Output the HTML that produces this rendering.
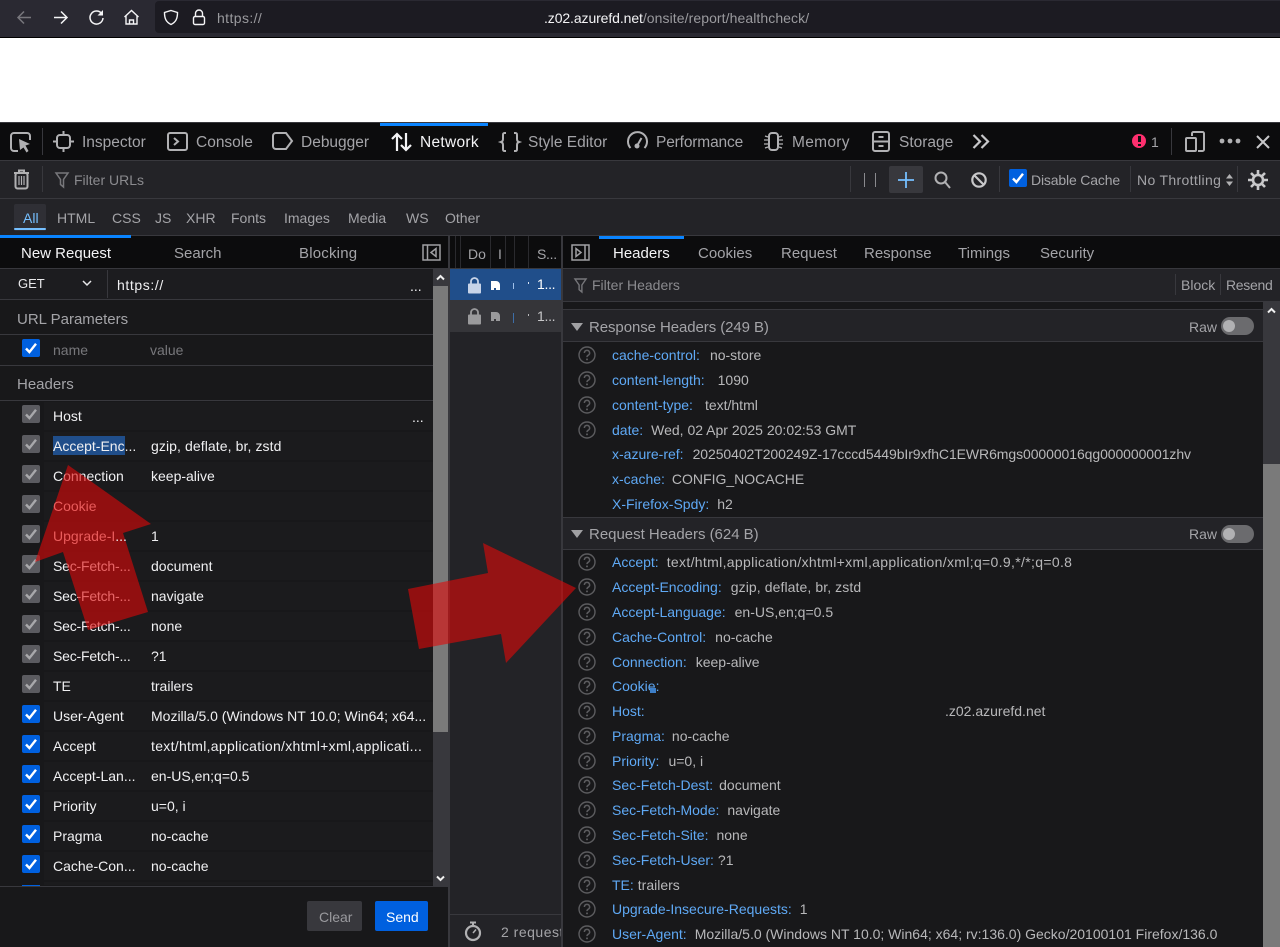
<!DOCTYPE html>
<html lang="en"><head><meta charset="utf-8"><title>Network</title>
<style>
html,body{margin:0;padding:0;width:1280px;height:947px;overflow:hidden;background:#18181a}
body{position:relative;font-family:"Liberation Sans",sans-serif;font-size:14px;color:#b1b1b3}
.b{position:absolute;display:block}
.t{position:absolute;white-space:nowrap;height:20px;line-height:20px}
.m{font-size:15.5px}
.w{color:#f0f0f2}.g{color:#a4a4a8}.d{color:#8a8a8e}.n{color:#5fa9f5}.v{color:#b8b8ba}
svg{position:absolute;display:block;overflow:visible}
.i{fill:none;stroke:#b1b1b3;stroke-width:2}
.cb{position:absolute;left:22px;width:18px;height:18px;border-radius:2px;background:#5b5b60}
.cb svg{left:0;top:0}
.cb.on{background:#0060df}
.q{position:absolute;left:578px;width:18px;height:18px}
</style></head><body>

<svg width="0" height="0" style="position:absolute"><defs>
<symbol id="q" viewBox="0 0 18 18"><circle cx="9" cy="9" r="8" fill="none" stroke="#5c5c5f" stroke-width="1.4"/><path d="M6.4 7a2.6 2.6 0 1 1 3.9 2.2c-.9.5-1.3 1-1.3 1.9" fill="none" stroke="#5c5c5f" stroke-width="1.5"/><circle cx="9" cy="13.4" r="1" fill="#5c5c5f"/></symbol>
<symbol id="ck" viewBox="0 0 18 18"><path d="M4 9.5l3.4 3.6L14 4.8" fill="none" stroke="currentColor" stroke-width="2.4"/></symbol>
</defs></svg>

<!-- browser bar -->
<div class="b" style="left:0;top:0;width:1280px;height:37px;background:#2a2932"></div>
<div class="b" style="left:155px;top:1px;width:1125px;height:32px;background:#1c1b22;border-radius:4px 0 0 4px"></div>
<div class="b" style="left:0;top:37px;width:1280px;height:1px;background:#000"></div>
<svg style="left:16px;top:9px" width="17" height="17" viewBox="0 0 17 17"><path d="M15 8.500H2M8 2.500L2 8.500l6 6" fill="none" stroke="#77767c" stroke-width="1.500"/></svg>
<svg style="left:52px;top:9px" width="17" height="17" viewBox="0 0 17 17"><path d="M2 8.500h13M9 2.500l6 6-6 6" fill="none" stroke="#f4f4f6" stroke-width="1.500"/></svg>
<svg style="left:88px;top:9px" width="17" height="17" viewBox="0 0 17 17"><path d="M13.600 4.500A6.500 6.500 0 1 0 15 9" fill="none" stroke="#f4f4f6" stroke-width="1.500"/><path d="M15 1v5.500H9.500z" fill="#f4f4f6"/></svg>
<svg style="left:123px;top:9px" width="17" height="17" viewBox="0 0 17 17"><path d="M1.500 8L8.500 1.500 15.500 8M3 7v8h11V7M6.500 15v-4h4v4" fill="none" stroke="#f4f4f6" stroke-width="1.400"/></svg>
<svg style="left:163px;top:9px" width="16" height="17" viewBox="0 0 16 17"><path d="M8 1.500l6.500 2c0 6-1.500 9.500-6.500 12C3 13 1.500 9.500 1.500 3.500z" fill="none" stroke="#f4f4f6" stroke-width="1.400"/></svg>
<svg style="left:192px;top:9px" width="14" height="17" viewBox="0 0 14 17"><path d="M3.500 7.500V4.500a3.500 3.500 0 0 1 7 0v3" fill="none" stroke="#f4f4f6" stroke-width="1.400"/><rect x="1.500" y="7.500" width="11" height="8" rx="1.500" fill="none" stroke="#f4f4f6" stroke-width="1.400"/></svg>
<div class="t" style="left:217px;top:8px;color:#9a9a9e;letter-spacing:.4px">https://</div>
<div class="t" style="left:544px;top:8px;color:#f4f4f6"><span style="letter-spacing:-.1px">.z02.azurefd.net</span><span style="color:#9a9a9e;letter-spacing:.08px">/onsite/report/healthcheck/</span></div>

<!-- page -->
<div class="b" style="left:0;top:38px;width:1280px;height:84px;background:#fff"></div>

<!-- devtools tabs -->
<div class="b" style="left:0;top:122px;width:1280px;height:38px;background:#0c0c0d;border-top:1px solid #38383d;box-sizing:border-box"></div>
<div class="b" style="left:380px;top:123px;width:108px;height:3px;background:#0a84ff"></div>
<div class="b" style="left:0;top:160px;width:1280px;height:1px;background:#38383d"></div>
<svg style="left:10px;top:132px" width="21" height="21" viewBox="0 0 21 21"><path d="M8 19H4a3 3 0 0 1-3-3V4a3 3 0 0 1 3-3h13a3 3 0 0 1 3 3v4" class="i"/><path d="M9 7l11 5-4.500 1.500L18.500 19l-2 1.500-3-5L10 18z" fill="#b1b1b3"/></svg>
<div class="b" style="left:42px;top:128px;width:1px;height:27px;background:#38383d"></div>
<svg style="left:53px;top:131px" width="21" height="21" viewBox="0 0 21 21"><rect x="4" y="4" width="13" height="13" rx="3" class="i"/><path d="M10.500 0v4M10.500 17v4M0 10.500h4M17 10.500h4" class="i"/></svg>
<div class="t g m" style="left:82px;top:133px">Inspector</div>
<svg style="left:167px;top:132px" width="21" height="19" viewBox="0 0 21 19"><rect x="1" y="1" width="19" height="17" rx="2" class="i"/><path d="M7 6l4 3.500L7 13" class="i"/></svg>
<div class="t g m" style="left:196px;top:133px">Console</div>
<svg style="left:272px;top:132px" width="21" height="18" viewBox="0 0 21 18"><path d="M4 1h10l6 8-6 8H4a3 3 0 0 1-3-3V4a3 3 0 0 1 3-3z" class="i"/></svg>
<div class="t g m" style="left:301px;top:133px">Debugger</div>
<svg style="left:391px;top:132px" width="21" height="20" viewBox="0 0 21 20"><path d="M6 19V2M1 7l5-5 5 5M15 1v17M10 13l5 5 5-5" fill="none" stroke="#f4f4f6" stroke-width="2.200"/></svg>
<div class="t m" style="left:420px;top:133px;color:#f4f4f6;letter-spacing:.3px">Network</div>
<svg style="left:500px;top:132px" width="20" height="20" viewBox="0 0 20 20"><path d="M6 1H4.500C3 1 3 2 3 3.500V7c0 1.500-.5 2.500-2 3 1.500.5 2 1.500 2 3v3.500C3 18 3 19 4.500 19H6M14 1h1.500C17 1 17 2 17 3.500V7c0 1.500.5 2.500 2 3-1.500.5-2 1.500-2 3v3.500c0 1.500 0 2.500-1.500 2.500H14" class="i"/></svg>
<div class="t g m" style="left:528px;top:133px">Style Editor</div>
<svg style="left:627px;top:131px" width="21" height="21" viewBox="0 0 21 21"><path d="M3.500 17A9.500 9.500 0 1 1 17.500 17" class="i"/><circle cx="10" cy="15" r="2.500" fill="#b1b1b3"/><path d="M10.500 14l4-7" class="i"/></svg>
<div class="t g m" style="left:656px;top:133px;letter-spacing:-.15px">Performance</div>
<svg style="left:763px;top:131px" width="21" height="21" viewBox="0 0 21 21"><rect x="6" y="2" width="9" height="17" rx="3" class="i"/><path d="M2 5l3 1M1 9h4M1 13h4M2 17l3-1M19 5l-3 1M20 9h-4M20 13h-4M19 17l-3-1" fill="none" stroke="#b1b1b3" stroke-width="1.300"/></svg>
<div class="t g m" style="left:792px;top:133px;letter-spacing:.3px">Memory</div>
<svg style="left:872px;top:131px" width="18" height="21" viewBox="0 0 18 21"><rect x="1" y="1" width="16" height="19" rx="2" class="i"/><path d="M1 10.500h16M6.500 6h5M6.500 15h5" class="i"/></svg>
<div class="t g m" style="left:899px;top:133px">Storage</div>
<svg style="left:972px;top:134px" width="18" height="15" viewBox="0 0 18 15"><path d="M1.500 1l6.500 6.500L1.500 14M9.500 1l6.500 6.500L9.500 14" fill="none" stroke="#c8c8ca" stroke-width="2.200"/></svg>
<div class="b" style="left:1132px;top:134px;width:14px;height:14px;border-radius:50%;background:#ff2f6e"></div>
<div class="b" style="left:1138px;top:136px;width:2.500px;height:6px;background:#111"></div>
<div class="b" style="left:1138px;top:143.500px;width:2.500px;height:2.500px;background:#111"></div>
<div class="t g" style="left:1151px;top:132px">1</div>
<div class="b" style="left:1171px;top:128px;width:1px;height:27px;background:#38383d"></div>
<svg style="left:1185px;top:131px" width="20" height="21" viewBox="0 0 20 21"><path d="M7 5V2.500A1.500 1.500 0 0 1 8.500 1h9A1.500 1.500 0 0 1 19 2.500v16a1.500 1.500 0 0 1-1.500 1.500H13" class="i"/><rect x="1" y="7" width="10" height="13" rx="1" class="i"/></svg>
<svg style="left:1219px;top:138px" width="22" height="6" viewBox="0 0 22 6"><circle cx="3" cy="3" r="2.400" fill="#b1b1b3"/><circle cx="11" cy="3" r="2.400" fill="#b1b1b3"/><circle cx="19" cy="3" r="2.400" fill="#b1b1b3"/></svg>
<svg style="left:1256px;top:135px" width="14" height="14" viewBox="0 0 14 14"><path d="M1 1l12 12M13 1L1 13" fill="none" stroke="#c8c8ca" stroke-width="2"/></svg>

<!-- toolbar -->
<div class="b" style="left:0;top:161px;width:1280px;height:37px;background:#232327"></div>
<div class="b" style="left:0;top:198px;width:1280px;height:1px;background:#38383d"></div>
<svg style="left:13px;top:169px" width="17" height="21" viewBox="0 0 17 21"><path d="M1 4h15M6 4V1.500h5V4" class="i"/><rect x="2.500" y="4" width="12" height="15.500" rx="2" class="i"/><path d="M6 7v9M8.500 7v9M11 7v9" fill="none" stroke="#b1b1b3" stroke-width="1.200"/></svg>
<div class="b" style="left:42px;top:166px;width:1px;height:26px;background:#38383d"></div>
<svg style="left:55px;top:172px" width="14" height="16" viewBox="0 0 14 16"><path d="M1 1h12L8.500 7.500V15L5.500 12.500V7.500z" fill="none" stroke="#77777b" stroke-width="1.500"/></svg>
<div class="t d" style="left:74px;top:170px">Filter URLs</div>
<div class="b" style="left:850px;top:166px;width:1px;height:26px;background:#38383d"></div>
<div class="b" style="left:863.500px;top:173px;width:1.500px;height:14px;background:#8a8a8e"></div>
<div class="b" style="left:874.500px;top:173px;width:1.500px;height:14px;background:#8a8a8e"></div>
<div class="b" style="left:889px;top:166px;width:34px;height:27px;background:#38383d;border-radius:2px"></div>
<svg style="left:898px;top:172px" width="16" height="16" viewBox="0 0 16 16"><path d="M8 0v16M0 8h16" fill="none" stroke="#75bfff" stroke-width="1.800"/></svg>
<svg style="left:934px;top:171px" width="17" height="18" viewBox="0 0 17 18"><circle cx="7" cy="7" r="5.500" class="i"/><path d="M11 11l5 6" class="i"/></svg>
<svg style="left:971px;top:172px" width="16" height="16" viewBox="0 0 16 16"><circle cx="8" cy="8" r="6.700" fill="none" stroke="#c8c8ca" stroke-width="2.200"/><path d="M3.500 3.500l9 9" fill="none" stroke="#c8c8ca" stroke-width="2.200"/></svg>
<div class="b" style="left:999px;top:166px;width:1px;height:26px;background:#38383d"></div>
<div class="cb on" style="left:1009px;top:169px;color:#fff"><svg width="18" height="18"><use href="#ck"/></svg></div>
<div class="t g" style="left:1031px;top:170px;letter-spacing:-.16px">Disable Cache</div>
<div class="b" style="left:1130px;top:166px;width:1px;height:26px;background:#38383d"></div>
<div class="t g" style="left:1137px;top:170px;letter-spacing:.33px">No Throttling</div>
<svg style="left:1226px;top:174px" width="7" height="12" viewBox="0 0 7 12"><path d="M3.500 0L7 4.500H0zM3.500 12L0 7.500h7z" fill="#b1b1b3"/></svg>
<div class="b" style="left:1237px;top:166px;width:1px;height:26px;background:#38383d"></div>
<svg style="left:1248px;top:170px" width="20" height="20" viewBox="0 0 20 20"><circle cx="10" cy="10" r="5" fill="none" stroke="#c8c8ca" stroke-width="2.600"/><path d="M10 0v4M10 16v4M0 10h4M16 10h4M3 3l3 3M14 14l3 3M17 3l-3 3M6 14l-3 3" fill="none" stroke="#c8c8ca" stroke-width="2.600"/></svg>

<!-- filter bar -->
<div class="b" style="left:0;top:199px;width:1280px;height:36px;background:#232327"></div>
<div class="b" style="left:0;top:235px;width:1280px;height:1px;background:#38383d"></div>
<div class="b" style="left:14px;top:204px;width:32px;height:27px;background:#2f2f35;border-radius:2px"></div>
<div class="b" style="left:14px;top:228px;width:32px;height:2px;background:#75bfff;border-radius:1px"></div>
<div class="t" style="left:23px;top:208px;color:#75bfff">All</div>
<div class="t g" style="left:57px;top:208px">HTML</div>
<div class="t g" style="left:112px;top:208px">CSS</div>
<div class="t g" style="left:155px;top:208px">JS</div>
<div class="t g" style="left:186px;top:208px">XHR</div>
<div class="t g" style="left:231px;top:208px">Fonts</div>
<div class="t g" style="left:284px;top:208px">Images</div>
<div class="t g" style="left:348px;top:208px">Media</div>
<div class="t g" style="left:406px;top:208px">WS</div>
<div class="t g" style="left:445px;top:208px">Other</div>

<!-- left panel -->
<div class="b" style="left:0;top:236px;width:448px;height:32px;background:#0c0c0d"></div>
<div class="b" style="left:0;top:235px;width:131px;height:3px;background:#0a84ff"></div>
<div class="b" style="left:0;top:268px;width:448px;height:1px;background:#38383d"></div>
<div class="t" style="left:21px;top:244px;font-size:15px;color:#f4f4f6">New Request</div>
<div class="t g" style="left:174px;top:244px;font-size:15px">Search</div>
<div class="t g" style="left:299px;top:244px;font-size:15px;letter-spacing:.2px">Blocking</div>
<svg style="left:422px;top:244px" width="19" height="17" viewBox="0 0 19 17"><rect x="1" y="1" width="17" height="15" fill="none" stroke="#a0a0a3" stroke-width="1.500"/><path d="M5.500 1v15M14 4.500v8L9 8.500z" fill="none" stroke="#a0a0a3" stroke-width="1.500"/></svg>

<div class="b" style="left:0;top:269px;width:433px;height:31px;background:#1c1c1f"></div>
<div class="t" style="left:18px;top:274px;color:#e8e8ea;font-size:13px">GET</div>
<svg style="left:82px;top:280px" width="10" height="7" viewBox="0 0 10 7"><path d="M1 1l4 4 4-4" fill="none" stroke="#e8e8ea" stroke-width="1.500"/></svg>
<div class="b" style="left:107px;top:270px;width:1px;height:28px;background:#38383d"></div>
<div class="t w" style="left:117px;top:275px;letter-spacing:.6px">https://</div>
<div class="t w" style="left:410px;top:276px">...</div>
<div class="b" style="left:0;top:299px;width:433px;height:1px;background:#38383d"></div>
<div class="t g" style="left:17px;top:310px;font-size:15px">URL Parameters</div>
<div class="b" style="left:0;top:334px;width:433px;height:1px;background:#38383d"></div>
<div class="cb on" style="top:339px;color:#fff"><svg width="18" height="18"><use href="#ck"/></svg></div>
<div class="t" style="left:53px;top:340px;color:#77777b;font-size:14px">name</div>
<div class="t" style="left:150px;top:340px;color:#77777b;font-size:14px">value</div>
<div class="b" style="left:0;top:365px;width:433px;height:1px;background:#38383d"></div>
<div class="t g" style="left:17px;top:375px;font-size:15px">Headers</div>
<div class="b" style="left:0;top:400px;width:433px;height:1px;background:#38383d"></div>

<!-- left rows -->
<div class="b" style="left:44px;top:402px;width:389px;height:483px;background:repeating-linear-gradient(#1b1b1d 0,#1b1b1d 28px,#18181a 28px,#18181a 30px)"></div>

<div class="cb" style="top:405px;color:#a8a8ab"><svg width="18" height="18"><use href="#ck"/></svg></div>
<div class="cb" style="top:435px;color:#a8a8ab"><svg width="18" height="18"><use href="#ck"/></svg></div>
<div class="cb" style="top:465px;color:#a8a8ab"><svg width="18" height="18"><use href="#ck"/></svg></div>
<div class="cb" style="top:495px;color:#a8a8ab"><svg width="18" height="18"><use href="#ck"/></svg></div>
<div class="cb" style="top:525px;color:#a8a8ab"><svg width="18" height="18"><use href="#ck"/></svg></div>
<div class="cb" style="top:555px;color:#a8a8ab"><svg width="18" height="18"><use href="#ck"/></svg></div>
<div class="cb" style="top:585px;color:#a8a8ab"><svg width="18" height="18"><use href="#ck"/></svg></div>
<div class="cb" style="top:615px;color:#a8a8ab"><svg width="18" height="18"><use href="#ck"/></svg></div>
<div class="cb" style="top:645px;color:#a8a8ab"><svg width="18" height="18"><use href="#ck"/></svg></div>
<div class="cb" style="top:675px;color:#a8a8ab"><svg width="18" height="18"><use href="#ck"/></svg></div>
<div class="cb on" style="top:705px;color:#fff"><svg width="18" height="18"><use href="#ck"/></svg></div>
<div class="cb on" style="top:735px;color:#fff"><svg width="18" height="18"><use href="#ck"/></svg></div>
<div class="cb on" style="top:765px;color:#fff"><svg width="18" height="18"><use href="#ck"/></svg></div>
<div class="cb on" style="top:795px;color:#fff"><svg width="18" height="18"><use href="#ck"/></svg></div>
<div class="cb on" style="top:825px;color:#fff"><svg width="18" height="18"><use href="#ck"/></svg></div>
<div class="cb on" style="top:855px;color:#fff"><svg width="18" height="18"><use href="#ck"/></svg></div>
<div class="b" style="left:22px;top:885px;width:18px;height:1px;background:#0060df"></div>

<div class="b" style="left:53px;top:436px;width:72px;height:19px;background:#204e8a"></div>
<div class="t w" style="left:53px;top:406px">Host</div>
<div class="t w" style="left:412px;top:407px">...</div>
<div class="t w" style="left:53px;top:436px">Accept-Enc...</div>
<div class="t w" style="left:151px;top:436px;letter-spacing:.09px">gzip, deflate, br, zstd</div>
<div class="t w" style="left:53px;top:466px">Connection</div>
<div class="t w" style="left:151px;top:466px">keep-alive</div>
<div class="t w" style="left:151px;top:526px">1</div>
<div class="t w" style="left:53px;top:556px;letter-spacing:-.2px">Sec-Fetch-...</div>
<div class="t w" style="left:151px;top:556px">document</div>
<div class="t w" style="left:53px;top:586px;letter-spacing:-.2px">Sec-Fetch-...</div>
<div class="t w" style="left:151px;top:586px">navigate</div>
<div class="t w" style="left:53px;top:616px;letter-spacing:-.2px">Sec-Fetch-...</div>
<div class="t w" style="left:151px;top:616px">none</div>
<div class="t w" style="left:53px;top:646px;letter-spacing:-.2px">Sec-Fetch-...</div>
<div class="t w" style="left:151px;top:646px">?1</div>
<div class="t w" style="left:53px;top:676px">TE</div>
<div class="t w" style="left:151px;top:676px">trailers</div>
<div class="t w" style="left:53px;top:706px">User-Agent</div>
<div class="t w" style="left:151px;top:706px">Mozilla/5.0 (Windows NT 10.0; Win64; x64...</div>
<div class="t w" style="left:53px;top:736px">Accept</div>
<div class="t w" style="left:151px;top:736px;letter-spacing:.3px">text/html,application/xhtml+xml,applicati...</div>
<div class="t w" style="left:53px;top:766px">Accept-Lan...</div>
<div class="t w" style="left:151px;top:766px">en-US,en;q=0.5</div>
<div class="t w" style="left:53px;top:796px">Priority</div>
<div class="t w" style="left:151px;top:796px">u=0, i</div>
<div class="t w" style="left:53px;top:826px">Pragma</div>
<div class="t w" style="left:151px;top:826px">no-cache</div>
<div class="t w" style="left:53px;top:856px">Cache-Con...</div>
<div class="t w" style="left:151px;top:856px">no-cache</div>

<!-- left scrollbar -->
<div class="b" style="left:433px;top:269px;width:15px;height:617px;background:#38383d"></div>
<div class="b" style="left:433px;top:286px;width:15px;height:446px;background:#7a7a7a"></div>
<svg style="left:436px;top:274px" width="9" height="7" viewBox="0 0 9 7"><path d="M1 5.500l3.500-3.500 3.500 3.500" fill="none" stroke="#f0f0f0" stroke-width="2"/></svg>
<svg style="left:436px;top:875px" width="9" height="7" viewBox="0 0 9 7"><path d="M1 1.500L4.500 5 8 1.500" fill="none" stroke="#f0f0f0" stroke-width="2"/></svg>

<!-- left footer -->
<div class="b" style="left:0;top:886px;width:448px;height:61px;background:#18181a;border-top:1px solid #38383d;box-sizing:border-box"></div>
<div class="b" style="left:307px;top:901px;width:55px;height:30px;background:#38383d;border-radius:2px"></div>
<div class="t" style="left:319px;top:907px;color:#9a9a9e">Clear</div>
<div class="b" style="left:375px;top:901px;width:53px;height:30px;background:#0060df;border-radius:2px"></div>
<div class="t" style="left:386px;top:907px;color:#fff">Send</div>

<!-- dividers -->
<div class="b" style="left:448px;top:236px;width:2px;height:711px;background:#38383d"></div>
<div class="b" style="left:561px;top:236px;width:2px;height:711px;background:#38383d"></div>

<!-- middle -->
<div class="b" style="left:450px;top:236px;width:111px;height:711px;background:#232327;overflow:hidden">
  <div class="b" style="left:0;top:0;width:111px;height:32px;background:#0c0c0d"></div>
  <div class="b" style="left:5px;top:0;width:1px;height:32px;background:#2a2a2e"></div>
  <div class="b" style="left:10px;top:0;width:1px;height:32px;background:#2a2a2e"></div>
  <div class="b" style="left:40px;top:0;width:1px;height:32px;background:#2a2a2e"></div>
  <div class="b" style="left:55px;top:0;width:1px;height:32px;background:#2a2a2e"></div>
  <div class="b" style="left:64px;top:0;width:1px;height:32px;background:#2a2a2e"></div>
  <div class="b" style="left:78px;top:0;width:1px;height:32px;background:#2a2a2e"></div>
  <div class="t g" style="left:18px;top:8px">Do</div>
  <div class="t g" style="left:48px;top:8px">I</div>
  <div class="t g" style="left:87px;top:8px;letter-spacing:-.3px">S...</div>
  <div class="b" style="left:0;top:32px;width:111px;height:1px;background:#38383d"></div>
  <div class="b" style="left:0;top:33px;width:111px;height:31px;background:#204e8a"></div>
  <div class="b" style="left:0;top:64px;width:111px;height:32px;background:#353539"></div>
  <svg style="left:18px;top:41px" width="13" height="17" viewBox="0 0 13 17"><path d="M3 7V4.500a3.500 3.500 0 0 1 7 0V7" fill="none" stroke="#c8d4e8" stroke-width="1.800"/><rect x="0" y="6.500" width="13" height="10" rx="1" fill="#c8d4e8"/></svg>
  <svg style="left:41px;top:45px" width="9" height="10" viewBox="0 0 9 10"><path d="M0 0h5a4 4 0 0 1 4 4v5H5V7H3v2H0z" fill="#fff"/></svg>
  <div class="b" style="left:63px;top:47px;width:1px;height:6px;background:#9fc0ea"></div>
  <div class="b" style="left:78px;top:46px;width:1px;height:2px;background:#d8e4f4"></div>
  <div class="t" style="left:87px;top:38px;color:#fff;letter-spacing:-.3px">1...</div>
  <svg style="left:18px;top:72px" width="13" height="17" viewBox="0 0 13 17"><path d="M3 7V4.500a3.500 3.500 0 0 1 7 0V7" fill="none" stroke="#9a9a9c" stroke-width="1.800"/><rect x="0" y="6.500" width="13" height="10" rx="1" fill="#9a9a9c"/></svg>
  <svg style="left:41px;top:76px" width="9" height="10" viewBox="0 0 9 10"><path d="M0 0h5a4 4 0 0 1 4 4v5H5V7H3v2H0z" fill="#9a9a9c"/></svg>
  <div class="b" style="left:63px;top:77px;width:1px;height:10px;background:#3d6ea8"></div>
  <div class="b" style="left:78px;top:78px;width:1px;height:2px;background:#b8b8ba"></div>
  <div class="t" style="left:87px;top:70px;color:#c8c8ca;letter-spacing:-.3px">1...</div>
  <div class="b" style="left:0;top:678px;width:111px;height:1px;background:#38383d"></div>
  <svg style="left:14px;top:685px" width="18" height="21" viewBox="0 0 18 21"><path d="M6 1.500h6M9 1.500v3" fill="none" stroke="#b1b1b3" stroke-width="2"/><circle cx="9" cy="12" r="7" fill="none" stroke="#b1b1b3" stroke-width="2.200"/><path d="M9 12l3-3.500" fill="none" stroke="#b1b1b3" stroke-width="1.500"/></svg>
  <div class="t g" style="left:51px;top:686px;letter-spacing:.5px">2 requests</div>
</div>

<!-- right panel -->
<div class="b" style="left:563px;top:236px;width:717px;height:32px;background:#0c0c0d"></div>
<div class="b" style="left:599px;top:236px;width:85px;height:3px;background:#0a84ff"></div>
<div class="b" style="left:563px;top:268px;width:717px;height:1px;background:#38383d"></div>
<svg style="left:571px;top:244px" width="19" height="17" viewBox="0 0 19 17"><rect x="1" y="1" width="17" height="15" fill="none" stroke="#a0a0a3" stroke-width="1.500"/><path d="M14 1v15M5 4.500v8l5-4z" fill="none" stroke="#a0a0a3" stroke-width="1.500"/></svg>
<div class="t" style="left:613px;top:244px;font-size:15px;color:#f4f4f6">Headers</div>
<div class="t g" style="left:698px;top:244px;font-size:15px">Cookies</div>
<div class="t g" style="left:781px;top:244px;font-size:15px">Request</div>
<div class="t g" style="left:864px;top:244px;font-size:15px">Response</div>
<div class="t g" style="left:958px;top:244px;font-size:15px">Timings</div>
<div class="t g" style="left:1040px;top:244px;font-size:15px">Security</div>

<div class="b" style="left:563px;top:269px;width:717px;height:32px;background:#232327"></div>
<div class="b" style="left:563px;top:301px;width:717px;height:1px;background:#38383d"></div>
<svg style="left:574px;top:278px" width="13" height="15" viewBox="0 0 14 16"><path d="M1 1h12L8.500 7.500V15L5.500 12.500V7.500z" fill="none" stroke="#77777b" stroke-width="1.500"/></svg>
<div class="t d" style="left:592px;top:275px">Filter Headers</div>
<div class="b" style="left:1175px;top:274px;width:1px;height:21px;background:#38383d"></div>
<div class="t g" style="left:1181px;top:275px">Block</div>
<div class="b" style="left:1220px;top:274px;width:1px;height:21px;background:#38383d"></div>
<div class="t g" style="left:1226px;top:275px;letter-spacing:-.3px">Resend</div>

<!-- section: response -->
<div class="b" style="left:563px;top:309px;width:700px;height:33px;background:#232327;border-top:1px solid #38383d;border-bottom:1px solid #38383d;box-sizing:border-box"></div>
<svg style="left:571px;top:323px" width="12" height="8" viewBox="0 0 12 8"><path d="M0 0h12L6 8z" fill="#a0a0a3"/></svg>
<div class="t g" style="left:589px;top:318px;font-size:15px;letter-spacing:-.08px">Response Headers (249 B)</div>
<div class="t g" style="left:1189px;top:317px">Raw</div>
<div class="b" style="left:1221px;top:317px;width:33px;height:18px;background:#6b6b6e;border-radius:9px"></div>
<div class="b" style="left:1223px;top:320px;width:12px;height:12px;background:#b1b1b3;border-radius:50%"></div>

<svg class="q" style="top:346px"><use href="#q"/></svg>
<svg class="q" style="top:371px"><use href="#q"/></svg>
<svg class="q" style="top:396px"><use href="#q"/></svg>
<svg class="q" style="top:421px"><use href="#q"/></svg>
<div class="t n" style="left:612px;top:345px">cache-control:<span class="v" style="margin-left:10px">no-store</span></div>
<div class="t n" style="left:612px;top:370px">content-length:<span class="v" style="margin-left:13px">1090</span></div>
<div class="t n" style="left:612px;top:395px">content-type:<span class="v" style="margin-left:12px">text/html</span></div>
<div class="t n" style="left:612px;top:420px">date:<span class="v" style="margin-left:8px">Wed, 02 Apr 2025 20:02:53 GMT</span></div>
<div class="t n" style="left:612px;top:444px">x-azure-ref:<span class="v" style="margin-left:9px;letter-spacing:-.08px">20250402T200249Z-17cccd5449bIr9xfhC1EWR6mgs00000016qg000000001zhv</span></div>
<div class="t n" style="left:612px;top:469px">x-cache:<span class="v" style="margin-left:7px">CONFIG_NOCACHE</span></div>
<div class="t n" style="left:612px;top:494px">X-Firefox-Spdy:<span class="v" style="margin-left:8px">h2</span></div>

<!-- section: request -->
<div class="b" style="left:563px;top:517px;width:700px;height:33px;background:#232327;border-top:1px solid #38383d;border-bottom:1px solid #38383d;box-sizing:border-box"></div>
<svg style="left:571px;top:530px" width="12" height="8" viewBox="0 0 12 8"><path d="M0 0h12L6 8z" fill="#a0a0a3"/></svg>
<div class="t g" style="left:589px;top:525px;font-size:15px;letter-spacing:-.02px">Request Headers (624 B)</div>
<div class="t g" style="left:1189px;top:524px">Raw</div>
<div class="b" style="left:1221px;top:525px;width:33px;height:18px;background:#6b6b6e;border-radius:9px"></div>
<div class="b" style="left:1223px;top:528px;width:12px;height:12px;background:#b1b1b3;border-radius:50%"></div>

<svg class="q" style="top:553px"><use href="#q"/></svg>
<svg class="q" style="top:578px"><use href="#q"/></svg>
<svg class="q" style="top:603px"><use href="#q"/></svg>
<svg class="q" style="top:628px"><use href="#q"/></svg>
<svg class="q" style="top:653px"><use href="#q"/></svg>
<svg class="q" style="top:677px"><use href="#q"/></svg>
<svg class="q" style="top:702px"><use href="#q"/></svg>
<svg class="q" style="top:727px"><use href="#q"/></svg>
<svg class="q" style="top:752px"><use href="#q"/></svg>
<svg class="q" style="top:776px"><use href="#q"/></svg>
<svg class="q" style="top:801px"><use href="#q"/></svg>
<svg class="q" style="top:826px"><use href="#q"/></svg>
<svg class="q" style="top:851px"><use href="#q"/></svg>
<svg class="q" style="top:876px"><use href="#q"/></svg>
<svg class="q" style="top:900px"><use href="#q"/></svg>
<svg class="q" style="top:925px"><use href="#q"/></svg>

<div class="t n" style="left:612px;top:552px">Accept:<span class="v" style="margin-left:8px;letter-spacing:.33px">text/html,application/xhtml+xml,application/xml;q=0.9,*/*;q=0.8</span></div>
<div class="t n" style="left:612px;top:577px">Accept-Encoding:<span class="v" style="margin-left:9px;letter-spacing:.09px">gzip, deflate, br, zstd</span></div>
<div class="t n" style="left:612px;top:602px">Accept-Language:<span class="v" style="margin-left:9px">en-US,en;q=0.5</span></div>
<div class="t n" style="left:612px;top:627px">Cache-Control:<span class="v" style="margin-left:9px">no-cache</span></div>
<div class="t n" style="left:612px;top:652px">Connection:<span class="v" style="margin-left:9px">keep-alive</span></div>
<div class="t n" style="left:612px;top:676px">Cookie:</div>
<div class="b" style="left:650px;top:688px;width:6px;height:5px;background:#3d7fc9"></div>
<div class="t n" style="left:612px;top:701px">Host:</div>
<div class="t v" style="left:945px;top:701px">.z02.azurefd.net</div>
<div class="t n" style="left:612px;top:726px">Pragma:<span class="v" style="margin-left:7px">no-cache</span></div>
<div class="t n" style="left:612px;top:751px">Priority:<span class="v" style="margin-left:9px">u=0, i</span></div>
<div class="t n" style="left:612px;top:775px">Sec-Fetch-Dest:<span class="v" style="margin-left:6px">document</span></div>
<div class="t n" style="left:612px;top:800px">Sec-Fetch-Mode:<span class="v" style="margin-left:8px">navigate</span></div>
<div class="t n" style="left:612px;top:825px">Sec-Fetch-Site:<span class="v" style="margin-left:8px">none</span></div>
<div class="t n" style="left:612px;top:850px">Sec-Fetch-User:<span class="v" style="margin-left:4px">?1</span></div>
<div class="t n" style="left:612px;top:875px">TE:<span class="v" style="margin-left:4px">trailers</span></div>
<div class="t n" style="left:612px;top:899px">Upgrade-Insecure-Requests:<span class="v" style="margin-left:8px">1</span></div>
<div class="t n" style="left:612px;top:924px">User-Agent:<span class="v" style="margin-left:8px">Mozilla/5.0 (Windows NT 10.0; Win64; x64; rv:136.0) Gecko/20100101 Firefox/136.0</span></div>

<!-- right scrollbar -->
<div class="b" style="left:1263px;top:302px;width:17px;height:645px;background:#38383d"></div>
<div class="b" style="left:1263px;top:464px;width:17px;height:483px;background:#7a7a7a"></div>
<svg style="left:1267px;top:307px" width="9" height="7" viewBox="0 0 9 7"><path d="M1 5.500l3.500-3.500 3.500 3.500" fill="none" stroke="#f0f0f0" stroke-width="2"/></svg>

<!-- red arrows -->
<svg style="left:0;top:0" width="1280" height="947" viewBox="0 0 1280 947">
<path d="M68 465L151 524 123 533 148 612 88 630 63 552 35 562z" fill="rgb(225,8,8)" fill-opacity=".6"/>
<path d="M408 589L488 573 483 543 576 588 506 663 501 634 419 649z" fill="rgb(225,8,8)" fill-opacity=".6"/>
</svg>

<!-- labels sitting under the translucent arrow, tinted to match -->
<div class="t" style="left:53px;top:496px;color:#ea5c5c">Cookie</div>
<div class="t" style="left:53px;top:526px;color:#ea5c5c">Upgrade-I<span style="color:#f0f0f2">...</span></div>
</body></html>
